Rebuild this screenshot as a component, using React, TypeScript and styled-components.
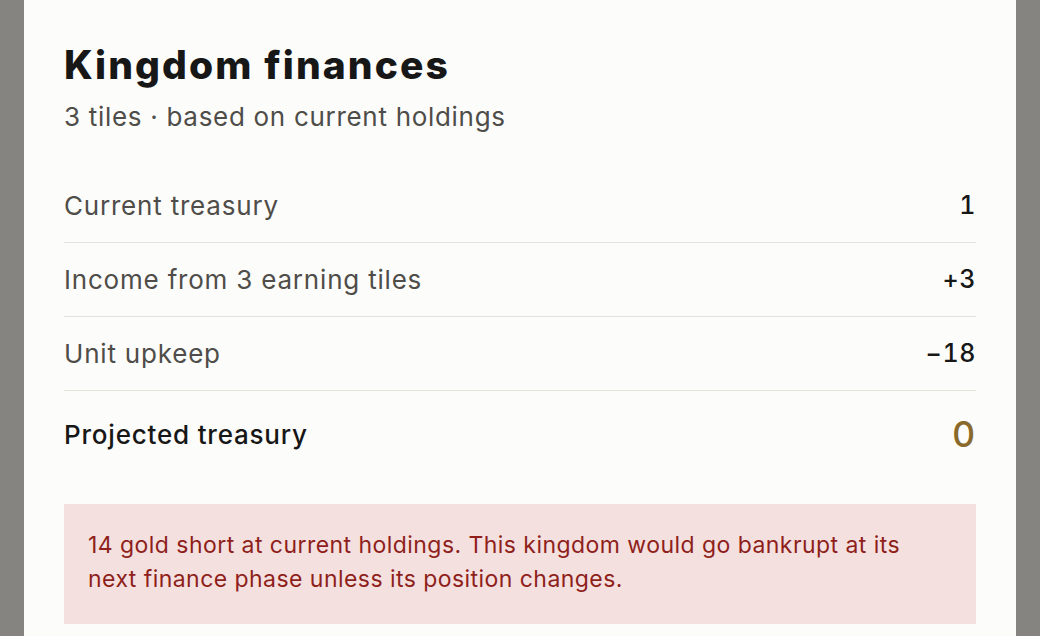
import React from "react";
import styled, { createGlobalStyle } from "styled-components";

const GlobalStyle = createGlobalStyle`
  html, body {
    margin: 0;
    padding: 0;
    background: #858480;
  }
  body {
    font-family: "Inter", "Liberation Sans", sans-serif;
    -webkit-font-smoothing: antialiased;
  }
  * { box-sizing: border-box; }
`;

const Backdrop = styled.div`
  min-height: 636px;
  padding: 0 24px;
  background: #858480;
`;

const Card = styled.section`
  background: #fcfcfa;
  padding: 42px 40px 40px;
  min-height: 700px;
`;

const Title = styled.h1`
  margin: 0;
  font-size: 39px;
  line-height: 46px;
  font-weight: 800;
  color: #171717;
  letter-spacing: 2.1px;
`;

const Subtitle = styled.p`
  margin: 10px 0 34px;
  font-size: 26px;
  line-height: 37px;
  color: #4f4d49;
  letter-spacing: 0.7px;
`;

const List = styled.div`
  display: flex;
  flex-direction: column;
`;

const Row = styled.div<{ $total?: boolean }>`
  display: flex;
  align-items: center;
  justify-content: space-between;
  padding: ${(p) => (p.$total ? "22px 0" : "18px 0")};
  border-bottom: ${(p) => (p.$total ? "none" : "1px solid #e6e2dc")};
`;

const Label = styled.span<{ $strong?: boolean }>`
  font-size: 26px;
  line-height: 37px;
  font-weight: ${(p) => (p.$strong ? 500 : 400)};
  color: ${(p) => (p.$strong ? "#171717" : "#4f4d49")};
  letter-spacing: 0.8px;
`;

const Value = styled.span<{ $accent?: boolean }>`
  font-size: ${(p) => (p.$accent ? "36px" : "25px")};
  line-height: ${(p) => (p.$accent ? "43px" : "37px")};
  font-weight: 500;
  color: ${(p) => (p.$accent ? "#8a6a2b" : "#171717")};
  letter-spacing: 0.6px;
  font-variant-numeric: tabular-nums;
`;

const Alert = styled.div`
  margin-top: 26px;
  background: #f5e0e0;
  padding: 24px 24px 28px;
  font-size: 23px;
  line-height: 34px;
  color: #8e1f1b;
  letter-spacing: 0.45px;
`;

const rows = [
  { label: "Current treasury", value: "1" },
  { label: "Income from 3 earning tiles", value: "+3" },
  { label: "Unit upkeep", value: "\u221218" },
];

export default function App() {
  return (
    <>
      <GlobalStyle />
      <Backdrop>
        <Card>
          <Title>Kingdom finances</Title>
          <Subtitle>3 tiles · based on current holdings</Subtitle>
          <List>
            {rows.map((r) => (
              <Row key={r.label}>
                <Label>{r.label}</Label>
                <Value>{r.value}</Value>
              </Row>
            ))}
            <Row $total>
              <Label $strong>Projected treasury</Label>
              <Value $accent>0</Value>
            </Row>
          </List>
          <Alert>
            14 gold short at current holdings. This kingdom would go bankrupt at its next
            finance phase unless its position changes.
          </Alert>
        </Card>
      </Backdrop>
    </>
  );
}
